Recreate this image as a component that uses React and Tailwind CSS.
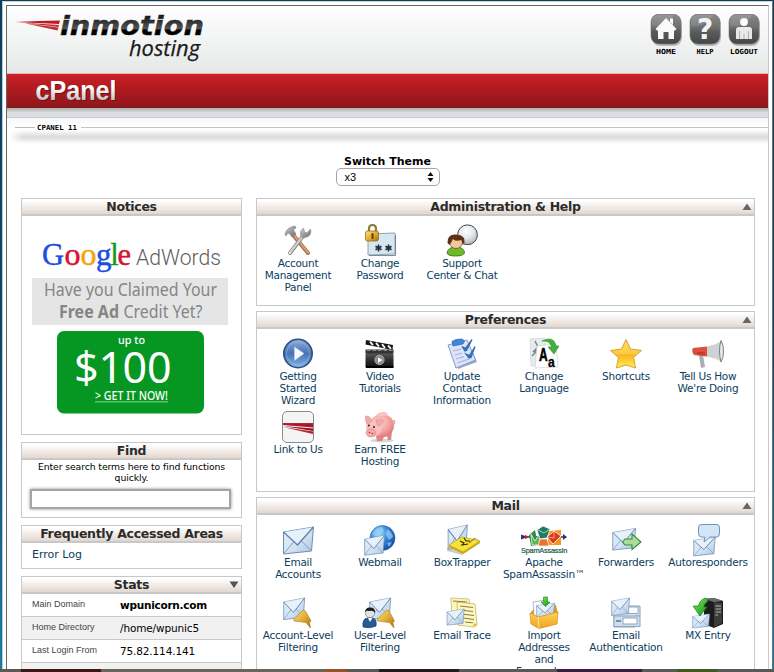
import React from "react";

const LABEL = "font-['DejaVu_Sans',Verdana,sans-serif]";

/* ---------- shared icon parts ---------- */
function Env({ transform }) {
  return (
    <g transform={transform}>
      <path d="M1 5 L31 0 L29 24 L1 27 Z" fill="url(#env)" stroke="#6f8bb3" strokeWidth="1" strokeLinejoin="round" />
      <path d="M1 27 L12 14 M29 24 L18 13" stroke="#7f9cc4" strokeWidth="1" fill="none" />
      <path d="M1 5 L15 18 L31 0" fill="#eef5fc" fillOpacity=".7" stroke="#5f7da8" strokeWidth="1.2" strokeLinejoin="round" />
    </g>
  );
}

function Defs() {
  return (
    <svg width="0" height="0" className="absolute">
      <defs>
        <linearGradient id="env" x1="0" y1="0" x2="1" y2="1">
          <stop offset="0" stopColor="#e3effa" /><stop offset=".5" stopColor="#d5e5f4" /><stop offset="1" stopColor="#a9c6e4" />
        </linearGradient>
        <linearGradient id="gold" x1="0" y1="0" x2="1" y2="1">
          <stop offset="0" stopColor="#fbe38a" /><stop offset=".5" stopColor="#e3ae35" /><stop offset="1" stopColor="#a8700f" />
        </linearGradient>
        <linearGradient id="star" x1="0" y1="0" x2="0" y2="1">
          <stop offset="0" stopColor="#ffdc66" /><stop offset=".5" stopColor="#fdcb3a" /><stop offset=".54" stopColor="#fab324" /><stop offset="1" stopColor="#fff04e" />
        </linearGradient>
        <radialGradient id="globe" cx=".35" cy=".3" r=".8">
          <stop offset="0" stopColor="#b5e2fb" /><stop offset=".45" stopColor="#3a88db" /><stop offset="1" stopColor="#0c3f9c" />
        </radialGradient>
        <radialGradient id="bubble" cx=".45" cy=".3" r=".75">
          <stop offset="0" stopColor="#fff" /><stop offset=".5" stopColor="#e3e6e8" /><stop offset="1" stopColor="#a6abb0" />
        </radialGradient>
        <radialGradient id="pig" cx=".4" cy=".35" r=".7">
          <stop offset="0" stopColor="#fdd5d1" /><stop offset=".6" stopColor="#f3a19d" /><stop offset="1" stopColor="#d97877" />
        </radialGradient>
        <linearGradient id="play" x1="0" y1="0" x2="0" y2="1">
          <stop offset="0" stopColor="#8fadd8" /><stop offset=".5" stopColor="#4673b5" /><stop offset="1" stopColor="#86b6e8" />
        </linearGradient>
        <linearGradient id="steel" x1="0" y1="0" x2="1" y2="1">
          <stop offset="0" stopColor="#d8d8d8" /><stop offset=".5" stopColor="#9b9b9b" /><stop offset="1" stopColor="#6f6f6f" />
        </linearGradient>
        <linearGradient id="green" x1="0" y1="0" x2="1" y2="1">
          <stop offset="0" stopColor="#7cf05a" /><stop offset="1" stopColor="#168a1c" />
        </linearGradient>
        <linearGradient id="box" x1="0" y1="0" x2="0" y2="1">
          <stop offset="0" stopColor="#ffd35c" /><stop offset="1" stopColor="#f0a21c" />
        </linearGradient>
        <linearGradient id="dark" x1="0" y1="0" x2="0" y2="1">
          <stop offset="0" stopColor="#5a5a5a" /><stop offset=".5" stopColor="#2c2c2c" /><stop offset="1" stopColor="#0c0c0c" />
        </linearGradient>
        <linearGradient id="logo" gradientUnits="userSpaceOnUse" x1="0" y1="14" x2="0" y2="36">
          <stop offset="0" stopColor="#111" /><stop offset=".35" stopColor="#333" /><stop offset=".68" stopColor="#555" /><stop offset=".72" stopColor="#000" /><stop offset="1" stopColor="#000" />
        </linearGradient>
        <linearGradient id="silver" gradientUnits="userSpaceOnUse" x1="0" y1="6" x2="0" y2="27">
          <stop offset="0.35" stopColor="#fff" /><stop offset="1" stopColor="#bdbdbd" />
        </linearGradient>
        <linearGradient id="nav" x1="0" y1="0" x2="0" y2="1">
          <stop offset="0" stopColor="#8a8a8a" /><stop offset=".45" stopColor="#6e6e6e" /><stop offset=".6" stopColor="#5a5a5a" /><stop offset="1" stopColor="#474747" />
        </linearGradient>
      </defs>
    </svg>
  );
}

const I = ({ children }) => (
  <svg width="32" height="32" viewBox="0 0 32 32" className="block shrink-0 overflow-visible">{children}</svg>
);

const Funnel = () => (
  <path d="M21 13 L23.500 14 L29 24 L27.500 25.500 L28.500 31 L24 25.500 L12 24 Q11 22 13 21 Z" fill="url(#gold)" stroke="#a97a22" strokeWidth=".6" />
);

const icons = {
  tools: (
    <I>
      <path d="M12 11 L26 28" stroke="#9a6a4a" strokeWidth="4" strokeLinecap="round" />
      <path d="M12.500 11 L26 27.500" stroke="#d99a68" strokeWidth="2.400" strokeLinecap="round" />
      <path d="M8 28 L21 11" stroke="#8a8a8a" strokeWidth="4" strokeLinecap="round" />
      <path d="M8 27.500 L21 11" stroke="#cfcfcf" strokeWidth="2.200" strokeLinecap="round" />
      <circle cx="7.800" cy="28" r="1" fill="#fff" />
      <path d="M18.500 10 Q17.500 5.500 21.500 3 L22.500 7 L25 8 L28.500 4 Q30 10 25 12 L21 13 Z" fill="url(#steel)" stroke="#888" strokeWidth=".6" />
      <path d="M3 9 Q5 2 13 1 L14 3 L11 4.500 L14 9 L10 12 L7 8 Q5 8 4 11 Z" fill="url(#steel)" stroke="#7b7b7b" strokeWidth=".6" />
    </I>
  ),
  lock: (
    <I>
      <path d="M4 9 L31 8 V29 L4 30 Z" fill="#d7e7ef" stroke="#8ea6b4" />
      <path d="M5 30.500 H31.500 V10" stroke="#60737e" fill="none" strokeWidth=".8" />
      <path d="M5 7 V4 Q5 0 8.500 0 Q12 0 12 4 V7" stroke="#8c7a3d" strokeWidth="2.200" fill="none" />
      <rect x="1.500" y="6" width="13" height="10" rx="2" fill="url(#gold)" stroke="#9b6c12" strokeWidth=".8" />
      <path d="M8.500 9 V13" stroke="#5e3c04" strokeWidth="2" strokeLinecap="round" />
      <g stroke="#1c2f3c" strokeWidth="1.600">
        <path d="M14.500 19.500 V26.500 M11.500 21.200 L17.500 24.800 M17.500 21.200 L11.500 24.800" />
        <path d="M24.500 19.500 V26.500 M21.500 21.200 L27.500 24.800 M27.500 21.200 L21.500 24.800" />
      </g>
    </I>
  ),
  support: (
    <I>
      <path d="M15 19 L17 15 L22 18 Z" fill="#ddd" stroke="#444" strokeWidth=".8" />
      <circle cx="21.500" cy="9.800" r="9.900" fill="url(#bubble)" stroke="#444" strokeWidth="1" />
      <path d="M1 28 Q2 22 10 22 Q18 22 18.500 28 Q17 31 9.500 31 Q2 31 1 28Z" fill="#6dbb2d" stroke="#2f7a0b" strokeWidth=".9" />
      <circle cx="10" cy="17" r="6.500" fill="#f3c79b" stroke="#5a3014" strokeWidth=".6" />
      <path d="M1.500 18 Q1 9 10 9.500 Q20 10 18.500 18 Q16 19 15.500 15 Q9 17 7 14 Q5 18 3.500 20 Z" fill="#5b3216" />
    </I>
  ),
  play: (
    <I>
      <circle cx="16" cy="15.500" r="14.200" fill="url(#play)" stroke="#2b4d82" strokeWidth="1.600" />
      <circle cx="16" cy="15.500" r="11.500" fill="none" stroke="#a9c8ee" strokeOpacity=".4" strokeWidth="1" />
      <path d="M12.500 9 L22 15.500 L12.500 22.500 Z" fill="#f6f9fd" stroke="#c8d8ec" strokeWidth=".5" />
    </I>
  ),
  video: (
    <I>
      <rect x="1.500" y="15" width="28" height="15" rx="1.500" fill="url(#dark)" />
      <rect x="1.500" y="11.500" width="28" height="4" fill="#333" />
      <path d="M3 12.500 H29" stroke="#888" strokeWidth="1" strokeDasharray="3.500 2" />
      <path d="M2 2 L29 7 L28.500 12 L1.500 6.500 Z" fill="#151515" />
      <path d="M6 3.600 L9 7.200 M12 4.900 L15 8.500 M18 6.200 L21 9.800 M24 7.500 L27 10.800" stroke="#eee" strokeWidth="1.900" />
      <circle cx="15.500" cy="22" r="4.700" fill="#8a8a8a" stroke="#bbb" strokeWidth=".7" />
      <path d="M14 19.500 L18.500 22 L14 25 Z" fill="#fff" />
      <path d="M2 29 H29.500" stroke="#000" strokeWidth="2" />
    </I>
  ),
  clipboard: (
    <I>
      <path d="M3 9 L22 4 L31 24 L12 31 Z" fill="#5572a8" fillOpacity=".6" />
      <path d="M2 7 L21 2 L29.500 22 L10 30 Z" fill="#dfe3fa" stroke="#8b98c8" strokeWidth="1" />
      <path d="M7 13 L15 11 M9 17 L16 15 M10 21 L18 18.500 M11.500 25 L23 21" stroke="#a6b3da" strokeWidth="1.100" />
      <path d="M6 3.500 L10 1.500 L16 1 L18.500 3 L17 6 L7 8 Z" fill="#3c88d8" stroke="#2a60a8" strokeWidth=".7" />
      <path d="M16 8.500 L19.500 10.500 L26 1.500 L20.500 12.500 L19 13 Z M20 16 L23.500 17.500 L29 8.500 L25 19.500 L23 20 Z" fill="#2f72c0" stroke="#2f72c0" strokeWidth="1.300" />
    </I>
  ),
  language: (
    <I>
      <path d="M2 1 L17 0 L18 27 L3 28 Z" fill="#e6ecec" stroke="#c5cdcd" strokeWidth=".6" />
      <path d="M7 3 L10 9 M4 18 L12 10 M10 9 L5 14 M6 14 L13 10" stroke="#77878b" strokeWidth="1.500" fill="none" />
      <path d="M9 8 L28 6 L30 29 L7 30 Z" fill="#fff" stroke="#d0d0d0" strokeWidth=".7" />
      <text x="11" y="22.500" fontFamily="'Liberation Sans',Arial,sans-serif" fontWeight="700" fontSize="19" textLength="8.500" lengthAdjust="spacingAndGlyphs" stroke="#000" strokeWidth=".6">A</text>
      <text x="20" y="29" fontFamily="'Liberation Sans',Arial,sans-serif" fontWeight="700" fontSize="14" textLength="6.500" lengthAdjust="spacingAndGlyphs" stroke="#000" strokeWidth=".3">a</text>
      <path d="M14 3 Q26 -3 28 8 L31 8 L26 16 L20 9 L23.500 9 Q22 2 14 3 Z" fill="#45b040" stroke="#2b8f32" strokeWidth=".6" />
    </I>
  ),
  star: (
    <I>
      <path d="M16 1.500 L20.500 11 L31.500 12.500 L23.600 19.500 L25.500 30 L16 27 L6.500 30 L8.400 19.500 L.5 12.500 L11.500 11 Z" fill="url(#star)" stroke="#d39535" strokeWidth=".9" strokeLinejoin="round" />
    </I>
  ),
  horn: (
    <I>
      <path d="M7 17 L11 17 L13 29 L9 30 Z" fill="#a8adb2" />
      <path d="M1 10 L15 8.500 V18.500 L2 17 Q-1 13 1 10Z" fill="#dc4f3c" />
      <path d="M15 8.500 L24 6 L30 2.500 V24 L24 21 L15 18.500 Z" fill="#cfd2d4" />
      <path d="M29 2.500 Q32 8 31.500 14 Q31.500 20 29 24 Q27.500 19 27.500 13 Q27.500 7 29 2.500Z" fill="#e6e8ea" stroke="#7c8082" strokeWidth="1" />
      <rect x="5" y="14" width="8" height="2.500" fill="#c23c2c" />
    </I>
  ),
  link: (
    <I>
      <rect x=".5" y=".5" width="31" height="31" rx="4.500" fill="#f4f4f5" stroke="#8c8c8c" />
      <path d="M1 12.500 H31 V16.500 L1 14 Z" fill="#b01626" />
      <path d="M1 15 L31 17.500 V20 Z" fill="#9b1020" />
      <path d="M1 16 L31 20.500 V23 Z" fill="#b32434" />
      <path d="M1 12.500 H31" stroke="#7b0d18" strokeWidth=".7" />
    </I>
  ),
  pig: (
    <I>
      <ellipse cx="18" cy="29.500" rx="12" ry="1.800" fill="#bbb" fillOpacity=".6" />
      <path d="M12 25 L13 30 H18 L20 26 L23 25 L24 29 H27 L28 21 Z" fill="#dd8583" />
      <ellipse cx="18" cy="14.500" rx="12" ry="11.500" fill="url(#pig)" />
      <path d="M12 4 Q17 -1 24 2 L22 5 L14 5Z" fill="#f8c4c0" />
      <path d="M28 10 Q33 8 29 15" stroke="#e9a09d" strokeWidth="1.200" fill="none" />
      <ellipse cx="10" cy="17" rx="8" ry="8.500" fill="#f9bfbb" />
      <path d="M1.500 5 Q7 5 8 10 L3 13 Q1 10 1.500 5 Z M12 9 Q18 7 20 10 Q18 14 14 15 Z" fill="#f3aaa7" stroke="#e08c89" strokeWidth=".6" />
      <ellipse cx="7" cy="22" rx="4.800" ry="4" fill="#f7aaa7" stroke="#d98280" strokeWidth=".7" />
      <circle cx="5.500" cy="21.500" r=".8" fill="#8d3434" /><circle cx="8.500" cy="22.500" r=".8" fill="#8d3434" />
      <circle cx="4.800" cy="14.500" r="1" fill="#222" /><circle cx="10" cy="16" r="1" fill="#222" />
    </I>
  ),
  email: (<I><Env transform="translate(.5 3)" /></I>),
  webmail: (
    <I>
      <circle cx="18.500" cy="14" r="12.500" fill="url(#globe)" stroke="#2464ae" strokeWidth=".6" />
      <path d="M9 10 Q12 3 18 3 L20 7 L16 10 L19 13 L13 15 Z M23 5 Q28 8 29 13 L25 16 L22 11 Z M23 19 L28 18 L25 23 Z" fill="#8fd0f5" fillOpacity=".75" />
      <Env transform="translate(0 11.500) scale(.66 .73)" />
    </I>
  ),
  boxtrapper: (
    <I>
      <path d="M1 24 L8 19 L31 14 L34 19 L16 31 L1 27 Z" fill="#9c9c8f" fillOpacity=".5" />
      <Env transform="translate(1.500 1) scale(.64 .9)" />
      <path d="M3 21 L16 13 L34 17 L17 28 Z" fill="#f7e23a" stroke="#bb9f1b" strokeWidth=".7" />
      <path d="M3 21 V23 L17 30 L34 19 V17 L17 28 Z" fill="#cbab15" />
      <path d="M14 17 L18 19 L16 21 L22 20 M18 14 L20 17 L24 17" stroke="#2d2900" strokeWidth="1.100" fill="none" />
      <path d="M23 19 L29 14" stroke="#77640a" />
    </I>
  ),
  spam: (
    <svg width="48" height="32" viewBox="0 0 48 32" className="block overflow-visible">
      <path d="M2 13 H46" stroke="#3b2d6e" strokeWidth="1.600" />
      <path d="M1 10.500 L8 13 L1 15.500 Z M43 10 L47 13 L43 16Z" fill="#3a2f73" />
      <path d="M5 11 L10 13 L5 15Z" fill="#c0272d" />
      <path d="M28 7 L41 6 V21 H28 Z" fill="#f39a1c" />
      <path d="M9 11 L15 6 L18 21 L11 22 Z" fill="#2b8c45" />
      <path d="M11 10 L15 17 L20 9 L20 21 H12Z" fill="#61b259" stroke="#fff" strokeWidth=".7" />
      <path d="M17 6 L23 2 L30 5 L27 14 L20 15 Z" fill="#1e7a67" stroke="#fff" strokeWidth=".7" />
      <path d="M18 6 L24 9 L30 5" stroke="#a5d8b5" fill="none" />
      <path d="M27 13 L34 7 L41 12 L33 20 Z" fill="#d93a1d" stroke="#fff" strokeWidth=".8" />
      <path d="M27 13 L34 14 L34 7" stroke="#ffd2a0" fill="none" strokeWidth=".7" />
      <path d="M18 22 L20 15 L27 15 L29 22 Z" fill="#e9752d" stroke="#fff" strokeWidth=".7" />
      <text x="1" y="29.300" fontFamily="'Liberation Sans',Arial,sans-serif" fontSize="8" fill="#1c5943" stroke="#1c5943" strokeWidth=".2" textLength="46" lengthAdjust="spacingAndGlyphs">SpamAssassin</text>
    </svg>
  ),
  forward: (
    <I>
      <Env transform="translate(2 4.500) scale(.76 .8)" />
      <path d="M15 15 H22 V10 L31 18 L22 25.500 V21 H15 L12.500 18 Z" fill="#a8dd9a" stroke="#3a8c36" strokeWidth="1.100" />
    </I>
  ),
  auto: (
    <I>
      <Env transform="translate(1 13) scale(.72 .7)" />
      <path d="M9 0.500 H25 Q27.500 .5 27.500 4 V9 Q27.500 13 25 13 H18 L12 18 L13 13 H9 Q6.500 13 6.500 9 V4 Q6.500 .5 9 .5Z" fill="#d3e6f7" stroke="#7493b8" />
    </I>
  ),
  acctFilter: (<I><Env transform="translate(1 1) scale(.7 .8)" /><Funnel /></I>),
  userFilter: (
    <I>
      <Env transform="translate(5 1) scale(.7 .8)" />
      <g transform="translate(1.500 0)"><Funnel /></g>
      <path d="M-1 30 Q-2 21 4 21 H8 Q13 21 12 29 Q6 32 -1 30Z" fill="#245c94" stroke="#123a66" strokeWidth=".7" />
      <path d="M4 21 L6 25 L8.500 21Z" fill="#fff" />
      <circle cx="6" cy="16" r="4.700" fill="#dfe3e6" stroke="#555" strokeWidth=".5" />
      <path d="M1 15 Q1.500 10 6.500 10.500 Q11.500 10.500 11 16 Q9.500 13 5.500 14 Q2.500 13 1 15Z" fill="#1b1b1b" />
    </I>
  ),
  trace: (
    <I>
      <path d="M5 1 L23 2 L26 22 L6 21 Z" fill="#fdf4b8" stroke="#c8b878" strokeWidth=".8" />
      <path d="M11 5 L29 7 L31 28 L28 30 L12 28 Z" fill="#fff7c2" stroke="#c8b468" strokeWidth=".8" />
      <path d="M7 4 L21 5 M14 9 L27 10.500 M14 13 L27 14.500 M15 17 L28 18.500 M17 21 L28 22.500 M19 25 L27 25.800" stroke="#8a7c3a" strokeWidth="1" />
      <path d="M27 30 L31 28 L28 26Z" fill="#e8bd25" />
      <Env transform="translate(.5 12) scale(.57 .6)" />
    </I>
  ),
  importer: (
    <I>
      <path d="M3 15 L9 8 H28 L30 17 H3 Z" fill="#e29b18" />
      <path d="M5 5 L18 3 L20 19 L6 19 Z" fill="#f8fbff" stroke="#8aa2c2" strokeWidth=".7" />
      <Env transform="translate(8 6) scale(.6 .55)" />
      <path d="M2 16 L10 20 L30 15 L29 27 L11 31.500 L3 27 Z" fill="url(#box)" stroke="#d08e14" strokeWidth=".7" />
      <path d="M10 20 L11 31" stroke="#ffe49a" />
      <path d="M15.500 0 H19.500 V5 H22 L17.500 9.500 L13 5 H15.500 Z" fill="url(#green)" stroke="#14861c" strokeWidth=".6" />
    </I>
  ),
  auth: (
    <I>
      <path d="M4 9 H30 V19 H25 V30 H4 Z" fill="#d9e6f2" stroke="#8ba4c0" />
      <rect x="4" y="19" width="26" height="10.500" fill="#cfdfee" stroke="#8ba4c0" />
      <rect x="14" y="10" width="14" height="6.500" fill="#fff" stroke="#7c95b3" strokeWidth=".8" />
      <rect x="13" y="21" width="14" height="6" fill="#fff" stroke="#7c95b3" strokeWidth=".8" />
      <path d="M6 24 H11" stroke="#4a6c97" strokeWidth="1.400" />
      <Env transform="translate(1 1) scale(.6 .65)" />
    </I>
  ),
  mx: (
    <I>
      <path d="M12 2 L22 1 L31 4 V27 L22 31 L12 27 Z" fill="#1c1c1c" />
      <path d="M22 5 L30 6 V26 L22 30 Z" fill="#3c3c3c" />
      <path d="M23.500 9 H29 M23.500 12 H29 M23.500 15 H29 M23.500 18 H26" stroke="#b9b9b9" strokeWidth="1" />
      <path d="M12 2 L22 1 L31 4 L22 5Z" fill="#6c6c6c" />
      <Env transform="translate(0 17) scale(.57 .52)" />
      <path d="M14 1 Q8 2 6.500 9 H1 L8 19 L15 10 H11.500 Q13 6 16 4 Z" fill="url(#green)" stroke="#147d1a" strokeWidth=".7" />
    </I>
  ),
};

/* ---------- layout parts ---------- */
function Head({ children, arrow }) {
  return (
    <div className="relative flex h-[17px] items-center justify-center border-b-2 border-[#c8c8c8] bg-linear-to-b from-white from-10% via-[#f1ebe7] via-55% to-[#e3d7cf] text-[12.500px] leading-[15px] font-bold tracking-[-0.3px] text-[#2b2b2b]">
      <span>{children}</span>
      {arrow && (
        <svg width="10" height="8" viewBox="0 0 10 8" className="absolute top-[4px] right-[2px]">
          {arrow === "up" ? <path d="M5 .5 L9.500 7 H.5 Z" fill="#666" /> : <path d="M5 7 L9.500 .5 H.5 Z" fill="#555" />}
        </svg>
      )}
    </div>
  );
}

function Panel({ title, arrow, className, children }) {
  return (
    <section className={`shrink-0 overflow-hidden border border-[#c8c8c8] bg-white ${className}`}>
      <Head arrow={arrow}>{title}</Head>
      {children}
    </section>
  );
}

function Items({ items }) {
  return (
    <div className="flex flex-wrap pt-[9px]">
      {items.map(([icon, ...lines]) => (
        <a key={lines.join(" ")} className="flex h-[73px] w-[82px] shrink-0 flex-col items-center text-[10.500px] leading-[12px] tracking-[-0.27px] text-[#0c3d5e]">
          {icons[icon]}
          <span className="flex flex-col items-center whitespace-nowrap">
            {lines.map((l) => <span key={l}>{l}</span>)}
          </span>
        </a>
      ))}
    </div>
  );
}

const admin = [
  ["tools", "Account", "Management", "Panel"],
  ["lock", "Change", "Password"],
  ["support", "Support", "Center & Chat"],
];
const prefs = [
  ["play", "Getting", "Started", "Wizard"],
  ["video", "Video", "Tutorials"],
  ["clipboard", "Update", "Contact", "Information"],
  ["language", "Change", "Language"],
  ["star", "Shortcuts"],
  ["horn", "Tell Us How", "We're Doing"],
  ["link", "Link to Us"],
  ["pig", "Earn FREE", "Hosting"],
];
const mail = [
  ["email", "Email", "Accounts"],
  ["webmail", "Webmail"],
  ["boxtrapper", "BoxTrapper"],
  ["spam", "Apache", "SpamAssassin™"],
  ["forward", "Forwarders"],
  ["auto", "Autoresponders"],
  ["acctFilter", "Account-Level", "Filtering"],
  ["userFilter", "User-Level", "Filtering"],
  ["trace", "Email Trace"],
  ["importer", "Import", "Addresses", "and", "Forwarders"],
  ["auth", "Email", "Authentication"],
  ["mx", "MX Entry"],
];

function NavButton({ label, width, children }) {
  return (
    <div className="flex w-[32px] flex-col items-center">
      <svg width="32" height="33" viewBox="0 0 32 33" className="block">
        <rect x="2" y="2" width="30" height="30" rx="8" fill="#bbb" />
        <rect x="1" y="0" width="30" height="30" rx="8" fill="url(#nav)" stroke="#777" strokeWidth=".6" />
        <path d="M2 12 Q18 14 24 1 H8 Q1 1 2 12Z" fill="#fff" fillOpacity=".12" />
        {children}
      </svg>
      <svg width="32" height="9" className="block overflow-visible">
        <text x="16" y="6.500" textAnchor="middle" fontFamily="'DejaVu Sans Mono',monospace" fontWeight="700" fontSize="7" textLength={width} lengthAdjust="spacingAndGlyphs">{label}</text>
      </svg>
    </div>
  );
}

function Header() {
  return (
    <>
      <header className="flex h-[67px] shrink-0 justify-between bg-linear-to-b from-white to-[#e6e8e8]">
        <svg width="210" height="64" viewBox="7 6 210 64" className="block">
          <path d="M15 22 Q38 20.500 60 20.500 L59 24 Z" fill="#c01a24" />
          <path d="M20 22.500 L59 25 L58.500 27 Z M26 23.500 L58.500 27.500 L57.500 30.500 Z" fill="#c4303a" />
          <text x="60" y="35" fontFamily="'DejaVu Sans',sans-serif" fontWeight="700" fontStyle="italic" fontSize="26" textLength="144" lengthAdjust="spacingAndGlyphs" fill="url(#logo)" stroke="#222" strokeWidth=".4">inmotion</text>
          <text x="129" y="56" fontFamily="'Open Sans','Noto Sans',sans-serif" fontStyle="italic" fontSize="22" textLength="71" lengthAdjust="spacingAndGlyphs" fill="#1a1a1a" stroke="#1a1a1a" strokeWidth=".25">hosting</text>
        </svg>
        <nav className="flex gap-[7px] pt-[8px] pr-[8px]">
          <NavButton label="HOME" width="20">
            <path d="M16 4 L26.500 15 L25 16.500 H24 V25 H18.500 V18 H13.500 V25 H8 V16.500 H7 L5.500 15 Z" fill="#fafafa" />
            <path d="M20 4.500 H23 V11 L20 8Z" fill="#fafafa" />
          </NavButton>
          <NavButton label="HELP" width="17">
            <text x="16" y="25" textAnchor="middle" fontFamily="'DejaVu Sans',sans-serif" fontWeight="700" fontSize="28" fill="#f4f4f4">?</text>
          </NavButton>
          <NavButton label="LOGOUT" width="28">
            <circle cx="16" cy="8" r="3.900" fill="#fafafa" />
            <path d="M11 13 H21 Q24 13 24 16 V25 H8 V16 Q8 13 11 13Z" fill="#e9e9e9" />
            <path d="M11.500 17 V25 M20.500 17 V25 M16 20 V25" stroke="#999" strokeWidth=".7" />
          </NavButton>
        </nav>
      </header>
      <div className="h-[35px] shrink-0 border-t border-b border-t-[#eab5b0] border-b-[#74201f] bg-linear-to-b from-[#c92026] to-[#90161b]">
        <svg width="160" height="33" className="block">
          <text x="29.500" y="27" fontFamily="'Liberation Sans',Arial,sans-serif" fontWeight="700" fontSize="27" textLength="81" lengthAdjust="spacingAndGlyphs" fill="#5c0d10" fillOpacity=".7">cPanel</text>
          <text x="28.500" y="26" fontFamily="'Liberation Sans',Arial,sans-serif" fontWeight="700" fontSize="27" textLength="81" lengthAdjust="spacingAndGlyphs" fill="url(#silver)">cPanel</text>
        </svg>
      </div>
      <div className="h-[10px] shrink-0 border-b border-[#c6c9d0] bg-linear-to-b from-[#adadad] via-[#dcdde0] via-50% to-[#dcdde0]" />
      <div className="flex h-[27px] shrink-0 flex-col bg-linear-to-b from-[#f7f7f9] from-0% via-white via-30% to-white">
        <div className="flex h-[18px] items-center">
          <div className="ml-[8px] h-px w-[20px] bg-[#bbb]" />
          <svg width="46" height="9" className="block">
            <text x="2" y="7" fontFamily="'DejaVu Sans Mono',monospace" fontWeight="700" fontSize="7" textLength="40" lengthAdjust="spacingAndGlyphs">CPANEL 11</text>
          </svg>
          <div className="h-px grow bg-[#c4c4c4]" />
        </div>
        <div className="-mt-[6px] ml-[2px] h-[14px] bg-linear-to-b from-transparent via-[#d9d9d9] via-50% to-transparent mask-l-from-[745px]" />
      </div>
    </>
  );
}

function Notices() {
  const f = "'Noto Sans','Open Sans',sans-serif";
  return (
    <svg width="219" height="219" viewBox="22 216 219 219" className="block">
      <g fontFamily="'Liberation Serif',serif" fontSize="32" strokeWidth=".5">
        <text x="42" y="265" textLength="22" lengthAdjust="spacingAndGlyphs" fill="#1c4fe0" stroke="#1c4fe0">G</text>
        <text x="64.500" y="265" textLength="16" lengthAdjust="spacingAndGlyphs" fontSize="31" fill="#d8132c" stroke="#d8132c">o</text>
        <text x="80.500" y="265" textLength="16" lengthAdjust="spacingAndGlyphs" fontSize="31" fill="#f5a30c" stroke="#f5a30c">o</text>
        <text x="96" y="265" textLength="15.500" lengthAdjust="spacingAndGlyphs" fontSize="31" fill="#1c4fe0" stroke="#1c4fe0">g</text>
        <text x="110.500" y="265" textLength="8" lengthAdjust="spacingAndGlyphs" fontSize="31" fill="#0c9a20" stroke="#0c9a20">l</text>
        <text x="117.500" y="265" textLength="13.500" lengthAdjust="spacingAndGlyphs" fontSize="31" fill="#d8132c" stroke="#d8132c">e</text>
      </g>
      <text x="136" y="265" fontFamily="Roboto,'Open Sans',sans-serif" fontWeight="300" fontSize="22.500" textLength="85" lengthAdjust="spacingAndGlyphs" fill="#606060">AdWords</text>
      <rect x="32" y="278" width="196" height="47" fill="#e5e5e5" />
      <g fontFamily={f} fontSize="17.500" fill="#858585">
        <text x="44" y="296" textLength="173" lengthAdjust="spacingAndGlyphs">Have you Claimed Your</text>
        <text x="59" y="318" fontWeight="700" textLength="60" lengthAdjust="spacingAndGlyphs">Free Ad</text>
        <text x="123.500" y="318" textLength="79" lengthAdjust="spacingAndGlyphs">Credit Yet?</text>
      </g>
      <rect x="57" y="331" width="147" height="82.500" rx="7" fill="#059722" />
      <g fontFamily={f} fill="#fff">
        <text x="118" y="344" fontSize="11.500" fontWeight="500" textLength="27" lengthAdjust="spacingAndGlyphs">up to</text>
        <text x="74 98.500 122.500 147" y="383" fontSize="43">$100</text>
        <text x="95" y="400" fontSize="12.500" fontWeight="500" textLength="73" lengthAdjust="spacingAndGlyphs">&gt; GET IT NOW!</text>
      </g>
      <rect x="95" y="401" width="73" height="1.600" fill="#59bb69" />
    </svg>
  );
}

function StatRow({ label, value, bold, shade }) {
  return (
    <div className={`flex h-[23px] shrink-0 items-center border-b border-[#c8c8c8] pl-[10px] ${shade ? "bg-[#f1f1f1]" : "bg-white"}`}>
      <span className="w-[88px] font-['Liberation_Sans',Arial,sans-serif] text-[9px] text-[#444]">{label}</span>
      <span className={`pt-[2px] text-[10.500px] text-black ${bold ? "font-bold tracking-[-0.26px]" : "tracking-[-0.14px]"}`}>{value}</span>
    </div>
  );
}

export default function App() {
  return (
    <div className={`flex h-[672px] w-[774px] flex-col overflow-hidden ${LABEL}`}>
      <Defs />
      <div className="flex h-[669px] shrink-0 bg-linear-to-b from-[#0d4058] via-[#0c4668] via-50% to-[#1d7aa3] pt-px pr-px pl-[2px]">
        <div className="flex grow border-t border-r border-l border-t-[#c9d3d9] border-r-[#6c7076] border-l-[#b9cbd6] bg-white pt-[3px] pr-[3px] pl-[3px]">
          <div className="flex grow flex-col overflow-hidden border-t border-r border-l border-t-[#666] border-r-[#c8c8c8] border-l-[#666]">
            <Header />
            <div className="flex shrink-0 flex-col items-center pt-[11px]">
              <div className="text-[11px] leading-[12px] font-bold text-black">Switch Theme</div>
              <div className="flex h-[18px] w-[104px] items-center justify-between rounded-[5px] border border-[#a5a5a5] bg-white pr-[5px] pl-[8px] font-['Liberation_Sans',Arial,sans-serif] text-[11px] text-black">
                x3
                <svg width="7" height="10" viewBox="0 0 7 10"><path d="M3.500 0 L6.500 4 H.5Z M3.500 10 L6.500 6 H.5Z" fill="#111" /></svg>
              </div>
            </div>
            <main className="flex shrink-0 items-start gap-[14px] pt-[12px] pl-[14px]">
              <aside className="flex w-[221px] flex-col gap-[7px]">
                <Panel title="Notices" className="h-[237px]"><Notices /></Panel>
                <Panel title="Find" className="h-[76px]">
                  <div className="pt-px text-center text-[9.300px] leading-[11px] tracking-[-0.1px] text-black">
                    Enter search terms here to find functions<br />quickly.
                  </div>
                  <div className="mr-[10px] ml-[8px] mt-[6px] h-[20px] border-2 border-[#a5a5a8] bg-white shadow-[0_0_3px_#888]" />
                </Panel>
                <Panel title="Frequently Accessed Areas" className="h-[44px]">
                  <div className="pt-[6px] pl-[10px] text-[11px] leading-[12px] text-[#0c3d5e]">Error Log</div>
                </Panel>
                <Panel title="Stats" arrow="down" className="h-[120px]">
                  <StatRow label="Main Domain" value="wpunicorn.com" bold />
                  <StatRow label="Home Directory" value="/home/wpunic5" shade />
                  <StatRow label="Last Login From" value="75.82.114.141" />
                  <div className="h-[23px] bg-[#f1f1f1]" />
                </Panel>
              </aside>
              <div className="flex w-[499px] flex-col gap-[5px]">
                <Panel title="Administration & Help" arrow="up" className="h-[108px]"><Items items={admin} /></Panel>
                <Panel title="Preferences" arrow="up" className="h-[181px]"><Items items={prefs} /></Panel>
                <Panel title="Mail" arrow="up" className="h-[260px]"><Items items={mail} /></Panel>
              </div>
            </main>
          </div>
        </div>
      </div>
      <div className="flex h-[3px] shrink-0 bg-[#5c5856]">
        <div className="ml-[21px] w-[80px] bg-[#3b1718]" />
        <div className="w-[224px] bg-[#6a645c]" />
        <div className="w-[22px] bg-[#96532a]" />
        <div className="ml-[32px] w-[80px] bg-[#241a1a]" />
        <div className="ml-[98px] w-[85px] bg-[#3a1d40]" />
        <div className="ml-[35px] w-[40px] bg-[#3e5a1c]" />
      </div>
    </div>
  );
}
